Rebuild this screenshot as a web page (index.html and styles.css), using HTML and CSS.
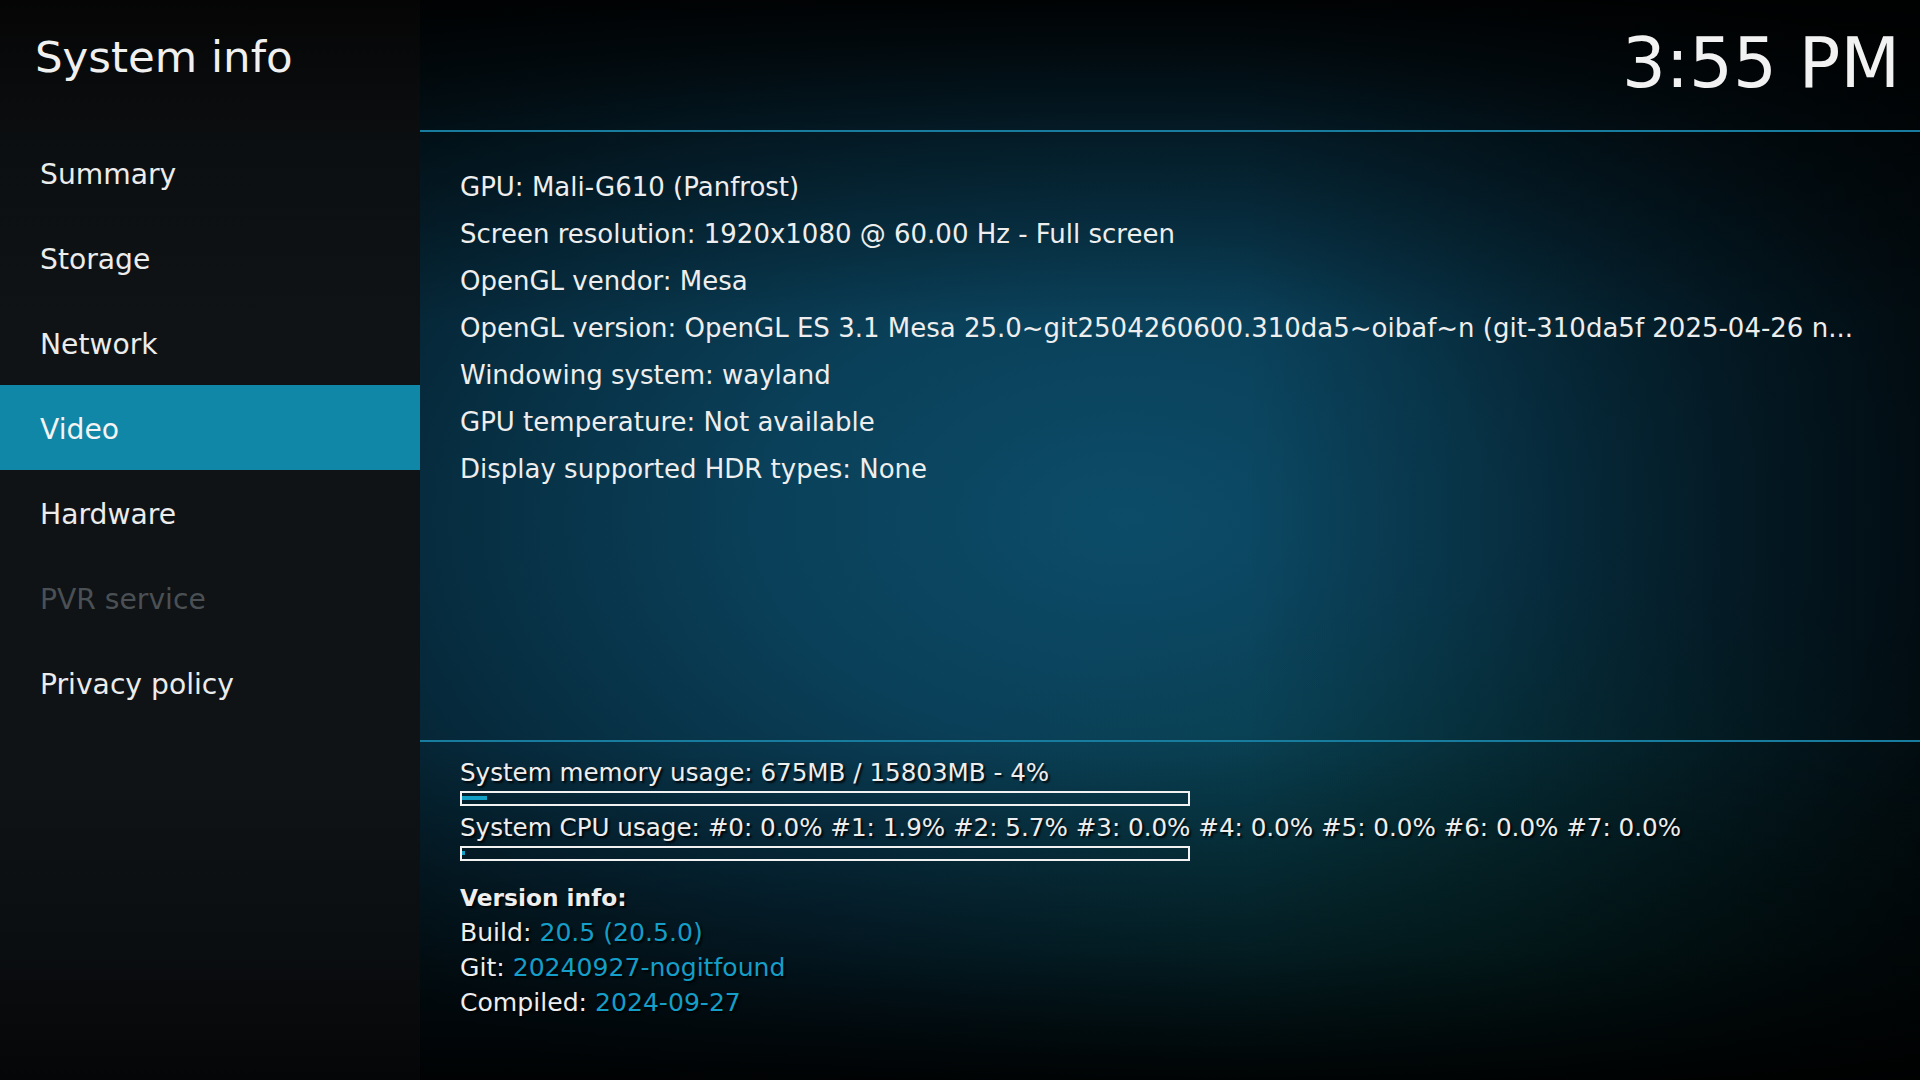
FILE: index.html
```html
<!DOCTYPE html>
<html lang="en">
<head>
    <meta charset="UTF-8">
    <meta name="viewport" content="width=device-width, initial-scale=1.0">
    <title>System info</title>
    <link rel="stylesheet" href="styles.css">
</head>
<body>
    <div class="screen">
        <div class="sidebar">
            <div class="page-title">System info</div>
            <ul class="menu">
                <li class="menu-item">Summary</li>
                <li class="menu-item">Storage</li>
                <li class="menu-item">Network</li>
                <li class="menu-item active">Video</li>
                <li class="menu-item">Hardware</li>
                <li class="menu-item disabled">PVR service</li>
                <li class="menu-item">Privacy policy</li>
            </ul>
        </div>
        <div class="main">
            <div class="topbar">
                <div class="clock">3:55 PM</div>
            </div>
            <div class="info-list">
                <div class="info-line">GPU: Mali-G610 (Panfrost)</div>
                <div class="info-line">Screen resolution: 1920x1080 @ 60.00 Hz - Full screen</div>
                <div class="info-line">OpenGL vendor: Mesa</div>
                <div class="info-line">OpenGL version: OpenGL ES 3.1 Mesa 25.0~git2504260600.310da5~oibaf~n (git-310da5f 2025-04-26 n...</div>
                <div class="info-line">Windowing system: wayland</div>
                <div class="info-line">GPU temperature: Not available</div>
                <div class="info-line">Display supported HDR types: None</div>
            </div>
            <div class="stats">
                <div class="stat-label">System memory usage: 675MB / 15803MB - 4%</div>
                <div class="progress"><div class="progress-fill" style="width: 25px"></div></div>
                <div class="stat-label cpu">System CPU usage: #0: 0.0% #1: 1.9% #2: 5.7% #3: 0.0% #4: 0.0% #5: 0.0% #6: 0.0% #7: 0.0%</div>
                <div class="progress"><div class="progress-fill" style="width: 3px"></div></div>

                <div class="version">
                    <div class="version-title">Version info:</div>
                    <div class="version-line">Build: <span class="value">20.5 (20.5.0)</span></div>
                    <div class="version-line">Git: <span class="value">20240927-nogitfound</span></div>
                    <div class="version-line">Compiled: <span class="value">2024-09-27</span></div>
                </div>
            </div>
        </div>
    </div>
</body>
</html>
```

FILE: styles.css
```css
body {
    margin: 0;
    padding: 0;
    background: #000;
    font-family: "DejaVu Sans", "Liberation Sans", sans-serif;
    color: #eeeeee;
}
* {box-sizing: border-box;}
.screen {
    display: flex;
    width: 1920px;
    height: 1080px;
    overflow: hidden;
}

/* left menu */
.sidebar {
    width: 420px;
    flex-shrink: 0;
    background: linear-gradient(to bottom, #050505 0%, #0c0f11 14%, #0f1316 30%, #0f1316 72%, #0b0e10 88%, #050607 100%);
}
.page-title {
    height: 130px;
    padding: 36px 0 0 35px;
    font-size: 43.5px;
    line-height: 43px;
    color: #f0f0f0;
}
.menu {
    list-style: none;
    margin: 0;
    padding: 0;
}
.menu-item {
    height: 85px;
    padding: 4px 0 0 40px;
    font-size: 28.2px;
    line-height: 81px;
    color: #ececec;
}
.menu-item.active {
    background-color: #1087a7;
    color: #f4f4f4;
}
.menu-item.disabled {
    color: #4a5054;
}

/* right panel */
.main {
    flex: 1;
    display: flex;
    flex-direction: column;
    background:
        linear-gradient(to bottom, rgba(0,0,0,0.92) 0%, rgba(0,0,0,0.45) 12%, rgba(0,0,0,0) 30%, rgba(0,0,0,0) 68%, rgba(0,0,0,0.45) 88%, rgba(0,0,0,0.9) 100%),
        linear-gradient(to right, rgba(0,0,0,0) 55%, rgba(0,0,0,0.65) 100%),
        radial-gradient(ellipse 45% 35% at 72% 88%, rgba(6,70,64,0.55), rgba(6,70,64,0) 100%),
        radial-gradient(ellipse 70% 60% at 47% 48%, #0c4c68 0%, #0a4059 35%, #062a3c 70%, #03161f 100%);
}
.topbar {
    height: 132px;
    border-bottom: 2px solid #177c9e;
    display: flex;
    justify-content: flex-end;
}
.clock {
    padding: 29px 20px 0 0;
    font-size: 69px;
    line-height: 69px;
    color: #f2f2f2;
}
.info-list {
    height: 608px;
    padding: 32px 0 0 40px;
}
.info-line {
    font-size: 26px;
    line-height: 47px;
    white-space: nowrap;
    color: #eeeeee;
}

.stats {
    flex: 1;
    border-top: 2px solid #177c9e;
    padding: 16px 0 0 40px;
    text-shadow: 2px 2px 2px rgba(0,0,0,0.85);
}
.stat-label {
    font-size: 24.6px;
    line-height: 30px;
    white-space: nowrap;
}
.stat-label.cpu {
    margin-top: 7px;
}
.progress {
    width: 730px;
    height: 15px;
    margin-top: 3px;
    border: 2px solid #f2f2f2;
    padding-top: 3px;
}
.progress-fill {
    height: 4px;
    background-color: #12a0c7;
}
.version {
    margin-top: 19px;
}
.version-title {
    font-size: 23.3px;
    font-weight: bold;
    line-height: 35px;
}
.version-line {
    font-size: 25.1px;
    line-height: 35px;
}
.value {
    color: #149ec8;
}
```
